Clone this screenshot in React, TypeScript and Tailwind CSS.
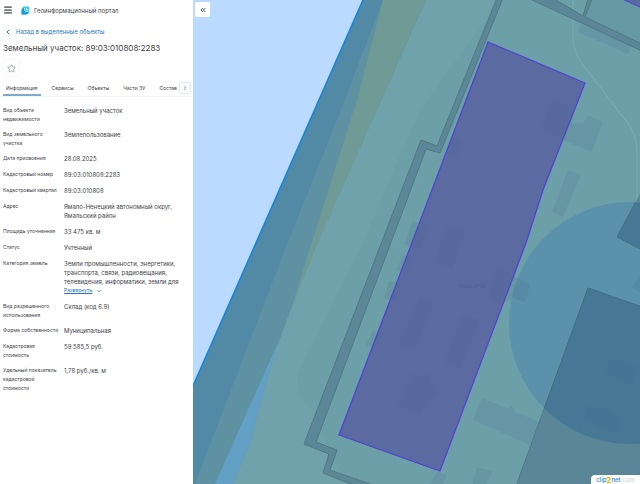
import { ChevronDown, ChevronLeft, ChevronRight, ChevronsLeft, Menu, Star } from 'lucide-react'

interface Field {
  label: string
  value: string
  expandable?: boolean
}

const TABS = ['Информация', 'Сервисы', 'Объекты', 'Части ЗУ', 'Состав']

const FIELDS: Field[] = [
  { label: 'Вид объекта недвижимости', value: 'Земельный участок' },
  { label: 'Вид земельного участка', value: 'Землепользование' },
  { label: 'Дата присвоения', value: '28.08.2025' },
  { label: 'Кадастровый номер', value: '89:03:010808:2283' },
  { label: 'Кадастровый квартал', value: '89:03:010808' },
  { label: 'Адрес', value: 'Ямало-Ненецкий автономный округ, Ямальский район' },
  { label: 'Площадь уточненная', value: '33 475 кв. м' },
  { label: 'Статус', value: 'Учтенный' },
  {
    label: 'Категория земель',
    value: 'Земли промышленности, энергетики, транспорта, связи, радиовещания, телевидения, информатики, земли для',
    expandable: true,
  },
  { label: 'Вид разрешенного использования', value: 'Склад (код 6.9)' },
  { label: 'Форма собственности', value: 'Муниципальная' },
  { label: 'Кадастровая стоимость', value: '59 585,5 руб.' },
  { label: 'Удельный показатель кадастровой стоимости', value: '1,78 руб./кв. м' },
]

const BUILDINGS = [
  '553,100 575,109 572,123 583,124 588,115 603,122 592,152 567,142 541,129',
  '568,170 581,175 563,217 552,212',
  '453,136 463,140 457,158 447,153',
  '447,226 465,231 452,268 435,262',
  '413,221 428,226 420,249 404,244',
  '403,255 413,258 406,274 396,270',
  '389,281 401,285 394,302 384,298',
  '373,330 383,334 376,348 366,345',
  '420,297 433,303 415,350 399,344',
  '463,314 479,320 460,369 445,363',
  '498,268 513,275 530,285 525,302 512,298 501,304 489,297',
  '412,374 420,378 424,373 430,376 428,382 438,387 436,395 430,398 420,415 398,405',
  '482,398 508,409 512,406 515,412 540,422 530,445 473,420',
  '477,467 492,471 487,484 472,484',
  '437,472 447,475 443,484 430,484',
  '612,357 638,367 632,385 604,373',
  '588,404 602,410 606,406 610,412 623,419 619,434 583,420',
  '640,274 632,288 640,292',
  '581,24 632,46 628,54 578,32',
]

function ParcelMap() {
  return (
    <svg
      className="absolute inset-0 h-full w-full"
      viewBox="193 0 447 484"
      preserveAspectRatio="xMinYMin slice"
      role="img"
      aria-label="Карта"
    >
      <defs>
        <clipPath id="zone">
          <circle cx="630" cy="323" r="121" />
        </clipPath>
      </defs>
      <rect x="193" width="447" height="484" fill="#badaff" />

      {/* shore bands */}
      <polygon points="363,0 640,0 640,484 193,484 193,386" fill="#528aa6" />
      <polygon points="383,0 337,120 288,242 195,484 235,484 420,0" fill="#5e92a3" />
      <polygon points="383,0 426,0 318,242 290,312 312,242 357,100" fill="#6f9a96" />
      <polygon points="426,0 640,0 640,484 233,484 250,442 268,375 281,336 290,312 318,242" fill="#6fa2ab" />
      <polygon points="281,336 268,375 250,442 233,484 215,484" fill="#62a0c6" />
      <polygon points="500,0 640,0 640,484 345,484 313,412 300,395 297,375 363,242 420,110" fill="#6d9fa9" />
      <line x1="363" y1="0" x2="193" y2="386" stroke="#1785dc" strokeWidth="1.6" />

      <polygon points="592,0 640,0 640,43 585,17" fill="#6799a4" />
      <path d="M573,0 V40 Q575,58 587,70 L623,117 Q637,132 637,150 V202" fill="none" stroke="#79a9b2" strokeWidth="1.2" />

      {/* protected zone and neighbour parcels */}
      <circle cx="630" cy="323" r="121" fill="#5b91aa" />
      <g fill="#5a8698">
        <polygon points="642,190 617,237 642,250" />
        <polygon points="588,288 642,307 642,486 516,486" stroke="#4f7d85" />
      </g>
      <g fill="#467896" clipPath="url(#zone)">
        <polygon points="642,190 617,237 642,250" stroke="#44717f" />
        <polygon points="588,288 642,307 642,486 516,486" stroke="#44717f" />
      </g>

      <g fill="#5b8798" stroke="#50797d" strokeWidth="1">
        <polygon points="497,-2 503,-2 440,153 426,149 316,442 337,450 330,470 376,486 356,486 323,473 329,454 304,444 421,140 437,146" />
        <path d="M530,-1 L554,-1 L583,16 L588,-1 L592,-1 L585,17 L642,44 L642,51 Z" />
      </g>

      <polygon points="622,-1 642,-1 642,8" fill="#5b6aa1" stroke="#4a45d0" />
      <polygon
        points="488,42 585,83 543,190 526,243 440,471 339,435"
        fill="#5b6aa1"
        stroke="#4f40d8"
        strokeWidth="1.2"
      />
      <g fill="#41688c" opacity="0.15">
        {BUILDINGS.map(points => (
          <polygon key={points} points={points} />
        ))}
      </g>
      <text x="458" y="288" fontSize="5" fill="#506096">
        Улица №48
      </text>
    </svg>
  )
}

function PortalLogo() {
  return (
    <svg className="size-[9px]" viewBox="0 0 18 18" aria-hidden="true">
      <path d="M5 1h8a4 4 0 0 1 4 4v4a8 8 0 0 1-8 8H1V9a8 8 0 0 1 4-8z" fill="#3fc6ea" />
      <path d="M1 9v8h8a8 8 0 0 0 7-4 9 9 0 0 1-10-9 8 8 0 0 0-5 5z" fill="#1c9bdc" />
      <path d="M7 4v3a4 4 0 0 0 4 4h4M11 4v3h4" fill="none" stroke="#e6f9ff" strokeWidth="1.5" />
    </svg>
  )
}

export default function App() {
  return (
    <div className="flex min-h-screen bg-white font-['Inter','Liberation_Sans',sans-serif] text-[#3d4248]">
      <aside className="w-[193px] shrink-0">
        <header className="flex h-5 items-center gap-2 pl-[3px]">
          <button type="button" aria-label="Меню">
            <Menu className="size-[10px]" strokeWidth={3} />
          </button>
          <div className="flex items-center gap-1">
            <PortalLogo />
            <span className="text-[6px] leading-[9px]">Геоинформационный портал</span>
          </div>
        </header>

        <a href="#" className="mt-[7px] flex items-center gap-1 pl-1 text-[6px] leading-[9px] text-[#2377bd]">
          <ChevronLeft className="size-2" strokeWidth={3} />
          Назад в выделенные объекты
        </a>

        <h1 className="mt-[6px] pl-[3px] text-[8px] leading-3">Земельный участок: 89:03:010808:2283</h1>

        <button
          type="button"
          aria-label="В избранное"
          className="mt-[6px] ml-[3px] flex size-4 items-center justify-center rounded-sm shadow-[0_0_2px_#dde3ea]"
        >
          <Star className="size-[9px] text-gray-500" strokeWidth={1.5} />
        </button>

        <div className="mt-1 flex items-center border-b border-gray-100">
          <nav className="flex flex-1 gap-2 overflow-hidden pl-[3px]">
            {TABS.map((tab, i) => (
              <button
                key={tab}
                type="button"
                className={`shrink-0 border-b-2 pt-1 pb-[2px] pl-[3px] text-[5px] leading-2 ${
                  i === 0 ? 'border-[#7fa9cf] pr-[3px]' : i === TABS.length - 1 ? 'border-transparent' : 'border-transparent pr-[3px]'
                }`}
              >
                {tab}
              </button>
            ))}
          </nav>
          <button
            type="button"
            aria-label="Следующие вкладки"
            className="mr-[2px] flex size-3 items-center justify-center rounded-xs border border-gray-200"
          >
            <ChevronRight className="size-[6px] text-[#2377bd]" strokeWidth={3} />
          </button>
        </div>

        <dl className="mt-[9px] flex flex-col gap-[6px] pr-1 pl-[3px]">
          {FIELDS.map(field => (
            <div key={field.label} className="flex">
              <dt className="w-[61px] shrink-0 pr-1 text-[5px] leading-[9px]">{field.label}</dt>
              <dd className="flex-1 pb-px text-[6px] leading-[9px]">
                {field.value}
                {field.expandable && (
                  <button type="button" className="flex items-center gap-1 text-[5px] leading-[9px] text-[#2377bd]">
                    <span className="underline">Развернуть</span>
                    <ChevronDown className="size-[6px]" strokeWidth={3} />
                  </button>
                )}
              </dd>
            </div>
          ))}
        </dl>
      </aside>

      <main className="relative flex-1 overflow-hidden">
        <ParcelMap />
        <button
          type="button"
          aria-label="Свернуть панель"
          className="absolute top-[2px] left-[2px] flex size-[15px] items-center justify-center rounded-xs bg-white text-[#2b5f8c]"
        >
          <ChevronsLeft className="size-2" strokeWidth={3} />
        </button>
        <div className="absolute right-0 bottom-0 flex h-[9px] w-[49px] items-center justify-center rounded-tl-sm bg-white text-[6px] font-medium text-[#2a86d1]">
          clip<span className="text-[8px] font-bold text-[#e8b400]">2</span>net
          <span className="text-gray-300">.com</span>
        </div>
      </main>
    </div>
  )
}
